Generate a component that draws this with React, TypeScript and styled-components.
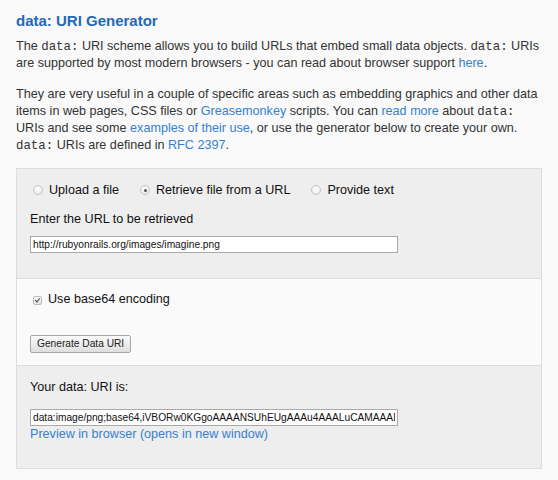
import React from "react";
import styled, { createGlobalStyle } from "styled-components";

const Global = createGlobalStyle`
  html, body { margin: 0; padding: 0; background: #f9f9f9; }
  body {
    font-family: "Liberation Sans", Arial, sans-serif;
    font-size: 12.6px;
    line-height: 17.3px;
    color: #333333;
  }
`;

const Page = styled.div`
  padding: 12px 16px 12px 16px;
`;

const Title = styled.h1`
  margin: 0 0 8px 0;
  font-size: 15px;
  line-height: 18px;
  font-weight: bold;
  color: #2468b8;
`;

const Para = styled.p`
  margin: 0 0 13px 0;
`;

const Code = styled.code`
  font-family: "Liberation Mono", "DejaVu Sans Mono", monospace;
  font-size: 12.4px;
  line-height: 1;
  color: #333;
`;

const Link = styled.a`
  color: #3680d2;
  text-decoration: none;
`;

const Panel = styled.div`
  border: 1px solid #dddddd;
  width: 526px;
  box-sizing: border-box;
`;

const Section = styled.div<{ $light?: boolean; $first?: boolean; $pt?: number }>`
  background: ${(p) => (p.$light ? "#fafafa" : "#eeeeee")};
  border-top: ${(p) => (p.$first ? "none" : "1px solid #dddddd")};
  padding: ${(p) => p.$pt ?? 13}px 13px 0 13px;
  color: #111;
`;

const Row = styled.div<{ $mb?: number }>`
  display: flex;
  align-items: center;
  margin-bottom: ${(p) => p.$mb ?? 0}px;
`;

const Option = styled.label`
  display: inline-flex;
  align-items: center;
  gap: 6px;
  margin-right: 21px;
  &:first-child { margin-left: 3px; }
`;

const Radio = styled.input.attrs({ type: "radio" })`
  appearance: none;
  margin: 0;
  width: 10px;
  height: 10px;
  border-radius: 50%;
  border: 1px solid #c6c6c6;
  background: radial-gradient(circle at 50% 35%, #ffffff 0%, #e4e4e4 100%);
  box-sizing: border-box;
  position: relative;
  &:checked::after {
    content: "";
    position: absolute;
    left: 2.5px;
    top: 2.5px;
    width: 3px;
    height: 3px;
    border-radius: 50%;
    background: #555;
  }
`;

const Check = styled.input.attrs({ type: "checkbox" })`
  appearance: none;
  margin: 0;
  width: 9px;
  height: 9px;
  border: 1px solid #bdbdbd;
  border-radius: 2px;
  background: linear-gradient(#ffffff, #e2e2e2);
  box-sizing: border-box;
  position: relative;
  &:checked::after {
    content: "";
    position: absolute;
    left: 2px;
    top: 0px;
    width: 2px;
    height: 4px;
    border: solid #444;
    border-width: 0 1.5px 1.5px 0;
    transform: rotate(40deg);
  }
`;

const Label = styled.div<{ $mb?: number }>`
  margin-bottom: ${(p) => p.$mb ?? 8}px;
`;

const TextInput = styled.input.attrs({ type: "text" })`
  display: block;
  width: 368px;
  height: 17px;
  box-sizing: border-box;
  border: 1px solid #a9a9a9;
  background: #ffffff;
  padding: 0 2px;
  font-family: "Liberation Sans", Arial, sans-serif;
  font-size: 10.2px;
  color: #111;
  outline: none;
`;

const Button = styled.button`
  display: block;
  height: 18px;
  padding: 0 6px;
  font-family: "Liberation Sans", Arial, sans-serif;
  font-size: 10.2px;
  color: #222;
  border: 1px solid #a6a6a6;
  border-radius: 2px;
  background: linear-gradient(#fbfbfb, #dedede);
  line-height: 16px;
`;

const Spacer = styled.div<{ $h: number }>`
  height: ${(p) => p.$h}px;
`;

export default function App() {
  return (
    <>
      <Global />
      <Page>
        <Title>data: URI Generator</Title>
        <Para>
          The <Code>data:</Code> URI scheme allows you to build URLs that embed small data objects.{" "}
          <Code>data:</Code> URIs are supported by most modern browsers - you can read about browser
          support <Link href="#">here</Link>.
        </Para>
        <Para>
          They are very useful in a couple of specific areas such as embedding graphics and other data
          items in web pages, CSS files or <Link href="#">Greasemonkey</Link> scripts. You can{" "}
          <Link href="#">read more</Link> about <Code>data:</Code> URIs and see some{" "}
          <Link href="#">examples of their use</Link>, or use the generator below to create your own.{" "}
          <Code>data:</Code> URIs are defined in <Link href="#">RFC 2397</Link>.
        </Para>
        <Panel>
          <Section $first>
            <Row $mb={12}>
              <Option>
                <Radio name="src" />
                Upload a file
              </Option>
              <Option>
                <Radio name="src" defaultChecked />
                Retrieve file from a URL
              </Option>
              <Option>
                <Radio name="src" />
                Provide text
              </Option>
            </Row>
            <Label>Enter the URL to be retrieved</Label>
            <TextInput defaultValue="http://rubyonrails.org/images/imagine.png" />
            <Spacer $h={25} />
          </Section>
          <Section $light $pt={12}>
            <Row>
              <Option>
                <Check defaultChecked />
                Use base64 encoding
              </Option>
            </Row>
            <Spacer $h={26} />
            <Button>Generate Data URI</Button>
            <Spacer $h={12} />
          </Section>
          <Section>
            <Label $mb={0}>Your data: URI is:</Label>
            <Spacer $h={13} />
            <TextInput defaultValue="data:image/png;base64,iVBORw0KGgoAAAANSUhEUgAAAu4AAALuCAMAAAD" />
            <Link href="#">Preview in browser (opens in new window)</Link>
            <Spacer $h={25} />
          </Section>
        </Panel>
      </Page>
    </>
  );
}
